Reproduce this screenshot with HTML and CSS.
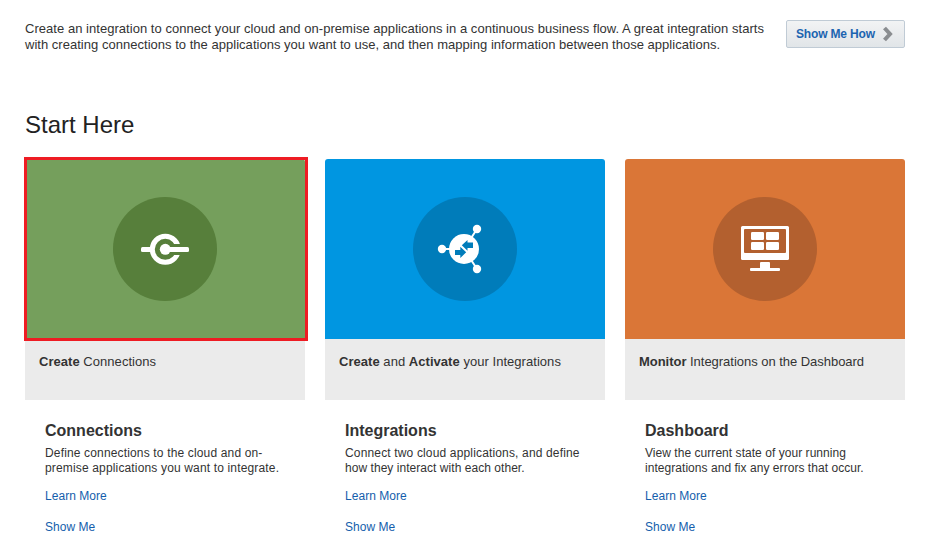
FILE: index.html
```html
<!DOCTYPE html>
<html lang="en">
<head>
<meta charset="utf-8">
<title>Start Here</title>
<link rel="stylesheet" href="styles.css">
</head>
<body>
<header class="intro">
  <p class="intro-text">Create an integration to connect your cloud and on-premise applications in a continuous business flow. A great integration starts<br><span class="intro-second">with creating connections to the applications you want to use, and then mapping information between those applications.</span></p>
  <button class="how" type="button"><span>Show Me How</span>
    <svg width="12" height="16" viewBox="0 0 12 16"><path d="M2.5 2 8 8l-5.5 6" fill="none" stroke="#8a8d90" stroke-width="4"/></svg>
  </button>
</header>
<h1>Start Here</h1>
<main class="cards">
  <section class="card">
    <div class="tile green selected">
      <svg width="104" height="104" viewBox="0 0 104 104">
        <circle cx="52" cy="52" r="52" fill="#577f3b"/>
        <circle cx="52.3" cy="52.3" r="13" fill="none" stroke="#fff" stroke-width="5"/>
        <path d="M55 47h14v11H55Z" fill="#577f3b"/>
        <rect x="28" y="50" width="11" height="5" rx="1.5" fill="#fff"/>
        <rect x="52" y="50" width="24" height="5" rx="1.5" fill="#fff"/>
        <circle cx="52.3" cy="52.3" r="5.5" fill="#fff"/>
      </svg>
    </div>
    <div class="caption"><b>Create</b> Connections</div>
    <div class="details">
      <h2>Connections</h2>
      <p><span class="wide">Define connections to the cloud and on-</span><br><span class="wide">premise applications you want to integrate.</span></p>
      <a href="#">Learn More</a>
      <a href="#">Show Me</a>
    </div>
  </section>
  <section class="card">
    <div class="tile blue">
      <svg width="104" height="104" viewBox="0 0 104 104">
        <circle cx="52" cy="52" r="52" fill="#007cba"/>
        <path d="M64 32 51 52 64 72M29 52h22" fill="none" stroke="#fff" stroke-width="2"/>
        <g fill="#fff"><circle cx="51" cy="52" r="15"/><circle cx="64" cy="32" r="4.2"/><circle cx="29" cy="52" r="4.2"/><circle cx="64" cy="72" r="4.2"/></g>
        <path d="M48.8 48.2 54.5 43v2.5H60V51h-5.5v2.7ZM42 53h5.3v-3.2l5.9 5.5-5.9 5.7v-3H42Z" fill="#007cba"/>
      </svg>
    </div>
    <div class="caption"><b>Create</b> and <b>Activate</b> your Integrations</div>
    <div class="details">
      <h2>Integrations</h2>
      <p><span class="wide">Connect two cloud applications, and define</span><br>how they interact with each other.</p>
      <a href="#">Learn More</a>
      <a href="#">Show Me</a>
    </div>
  </section>
  <section class="card">
    <div class="tile orange">
      <svg width="104" height="104" viewBox="0 0 104 104">
        <circle cx="52" cy="52" r="52" fill="#b3602f"/>
        <rect x="28" y="29" width="48" height="34" rx="1.5" fill="#fff"/>
        <rect x="31" y="32" width="42" height="24" rx="1" fill="#b3602f"/>
        <g fill="#fff">
          <rect x="38" y="35" width="13" height="8" rx="1.2"/><rect x="53" y="35" width="13" height="8" rx="1.2"/>
          <rect x="38" y="45" width="13" height="8" rx="1.2"/><rect x="53" y="45" width="13" height="8" rx="1.2"/>
          <path d="M47 71v-5q0-1 1-1h8q1 0 1 1v5Z"/><rect x="37" y="71" width="30" height="3" rx="1"/>
        </g>
      </svg>
    </div>
    <div class="caption snug"><b>Monitor</b> Integrations on the Dashboard</div>
    <div class="details">
      <h2>Dashboard</h2>
      <p>View the current state of your running<br>integrations and fix any errors that occur.</p>
      <a href="#">Learn More</a>
      <a href="#">Show Me</a>
    </div>
  </section>
</main>
</body>
</html>
```
FILE: styles.css
```css
* { box-sizing: border-box; }
body {
  margin: 0;
  padding: 20px 27px 0 25px;
  height: 553px;
  overflow: hidden;
  background: #fff;
  color: #333;
  font-family: "Liberation Sans", Arial, sans-serif;
}
.intro { display: flex; justify-content: space-between; height: 90px; }
.intro-text { margin: 1px 0 0; font-size: 13px; line-height: 16px; letter-spacing: 0.037px; white-space: nowrap; }
.intro-second { letter-spacing: 0.024px; }
.how {
  display: flex;
  align-items: center;
  justify-content: space-between;
  width: 119px;
  height: 28px;
  padding: 0 10px 0 9px;
  border: 1px solid #c0cbd5;
  border-radius: 2px;
  background: linear-gradient(#f2f3f4, #e1e5e8);
  color: #1c64b0;
  font: bold 12px "Liberation Sans", Arial, sans-serif;
  letter-spacing: -0.16px;
  white-space: nowrap;
}
h1 { margin: 0; height: 49px; font-size: 24px; font-weight: 400; line-height: 30px; color: #222; }
.cards { display: grid; grid-template-columns: repeat(3, 280px); gap: 20px; }
.tile {
  position: relative;
  display: flex;
  align-items: center;
  justify-content: center;
  height: 180px;
  border-radius: 3px 3px 0 0;
}
.green { background: #759f5c; }
.blue { background: #0096e1; }
.orange { background: #da7637; }
.selected::after {
  content: "";
  position: absolute;
  inset: -2px -3px -2px -1px;
  border: 3px solid #ee1c23;
}
.caption { height: 61px; padding: 15px 14px; background: #ebebeb; font-size: 13px; line-height: 16px; letter-spacing: 0.04px; white-space: nowrap; }
.snug { letter-spacing: -0.03px; }
.details { padding: 21px 0 0 20px; font-size: 12px; line-height: 15px; letter-spacing: 0.045px; white-space: nowrap; }
.details h2 { margin: 0 0 5px; font-size: 16px; line-height: 20px; letter-spacing: 0; }
.details p { margin: 0 0 13px; }
.wide { letter-spacing: 0.155px; }
.details a { display: block; margin-bottom: 16px; color: #145eac; text-decoration: none; }
```
